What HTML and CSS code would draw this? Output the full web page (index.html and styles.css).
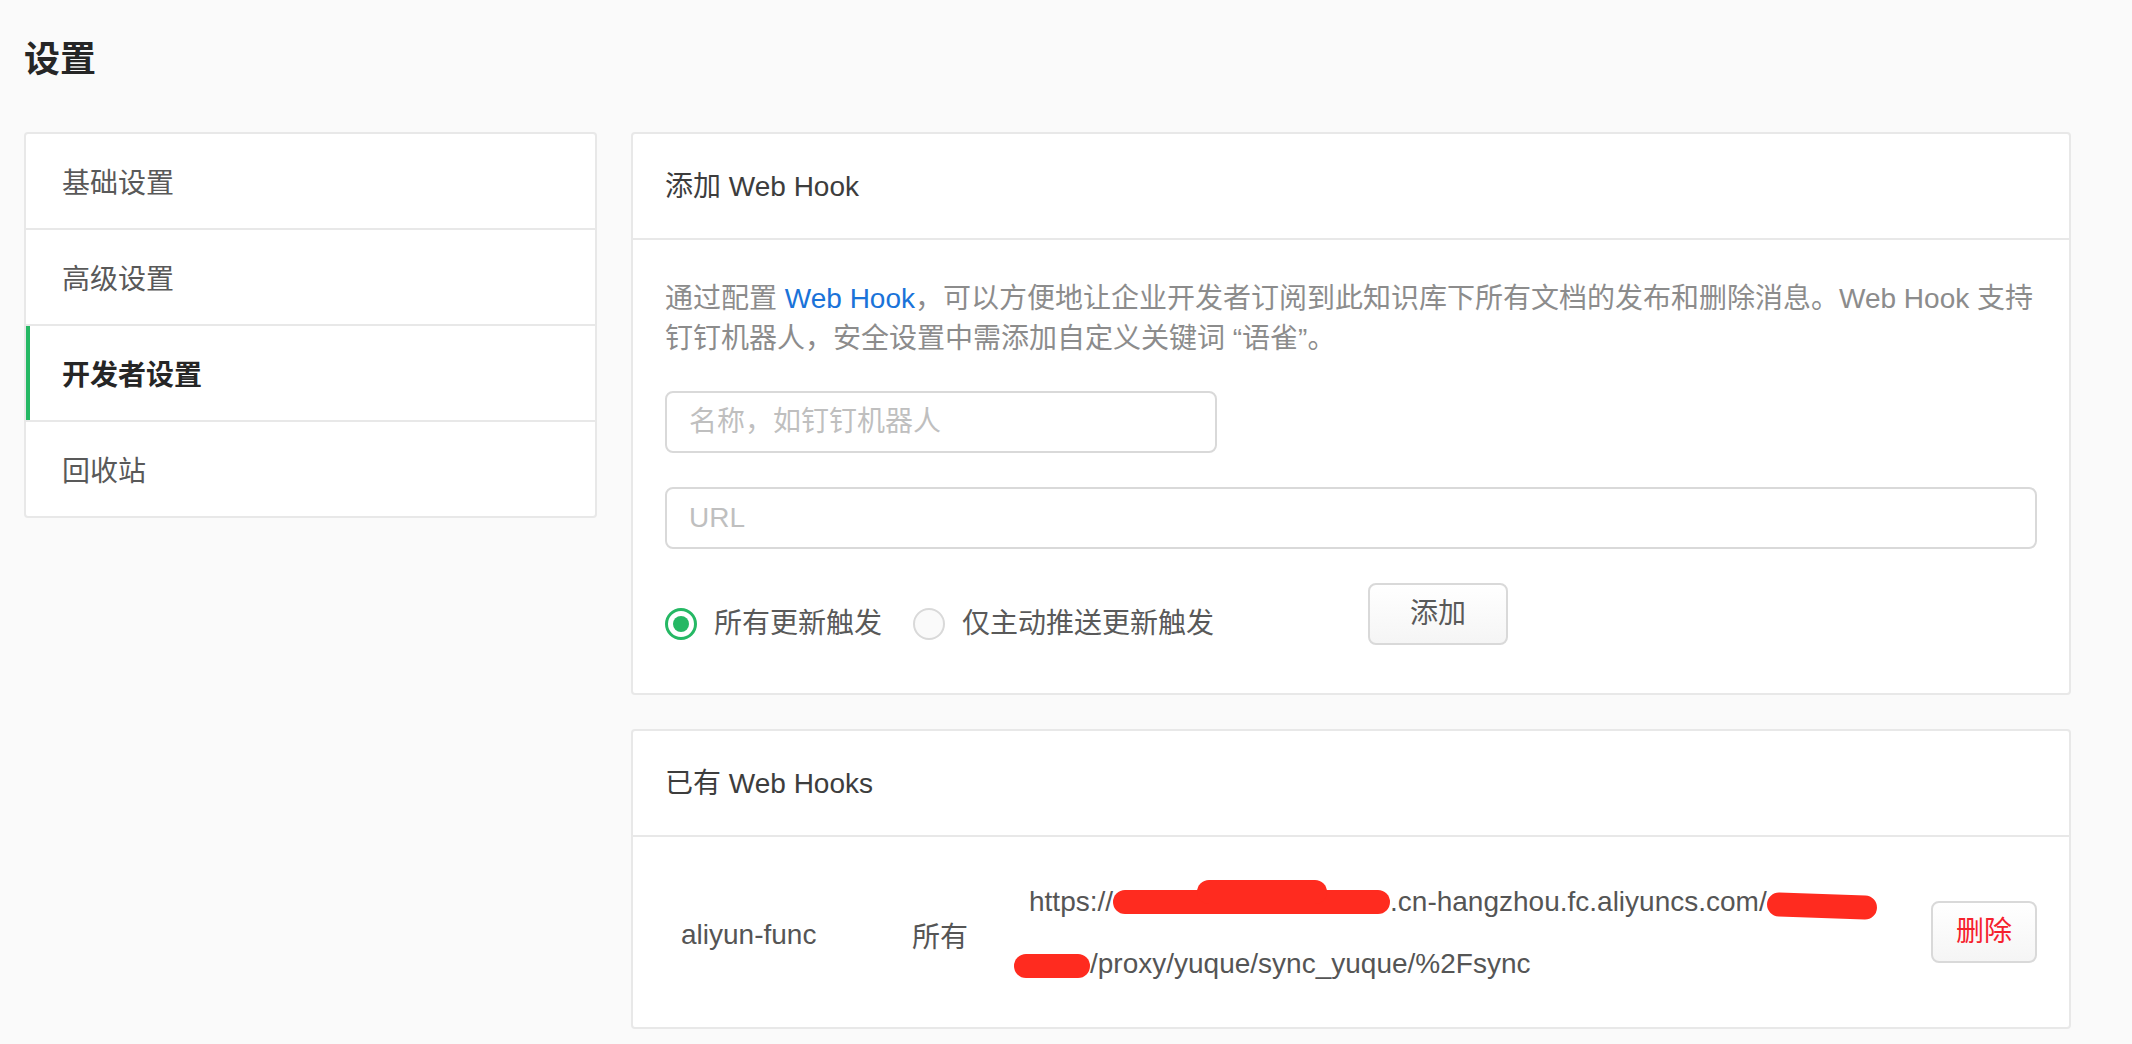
FILE: index.html
```html
<!DOCTYPE html>
<html lang="zh-CN">
<head>
<meta charset="utf-8">
<title>设置</title>
<link rel="stylesheet" href="styles.css">
</head>
<body>
<div class="page">
  <h1 class="page-title">设置</h1>
  <div class="layout">
    <nav class="side-menu">
      <div class="menu-item">基础设置</div>
      <div class="menu-item">高级设置</div>
      <div class="menu-item active">开发者设置</div>
      <div class="menu-item">回收站</div>
    </nav>
    <main class="content">
      <section class="panel">
        <div class="panel-head">添加 Web Hook</div>
        <div class="panel-body form-body">
          <p class="desc">通过配置 <a class="link">Web Hook</a>，可以方便地让企业开发者订阅到此知识库下所有文档的发布和删除消息。Web Hook 支持<br>钉钉机器人，安全设置中需添加自定义关键词 “语雀”。</p>
          <input class="input input-name" type="text" placeholder="名称，如钉钉机器人">
          <input class="input input-url" type="text" placeholder="URL">
          <div class="actions">
            <div class="radio-group">
              <label class="radio checked"><span class="radio-dot"></span><span class="radio-label">所有更新触发</span></label>
              <label class="radio"><span class="radio-dot"></span><span class="radio-label">仅主动推送更新触发</span></label>
            </div>
            <button class="btn btn-add">添加</button>
          </div>
        </div>
      </section>
      <section class="panel panel-list">
        <div class="panel-head">已有 Web Hooks</div>
        <div class="panel-body hook-row">
          <div class="cell cell-name">aliyun-func</div>
          <div class="cell cell-type">所有</div>
          <div class="cell cell-url">
            <div class="url-line">https://<span class="scribble scribble-a"></span>.cn-hangzhou.fc.aliyuncs.com/<span class="scribble scribble-b"></span></div>
            <div class="url-line"><span class="scribble scribble-c"></span>/proxy/yuque/sync_yuque/%2Fsync</div>
          </div>
          <div class="cell cell-action"><button class="btn btn-danger">删除</button></div>
        </div>
      </section>
    </main>
  </div>
</div>
</body>
</html>
```
FILE: styles.css
```css
* { box-sizing: border-box; }

html, body {
  margin: 0;
  padding: 0;
  background: #fafafa;
}

body {
  font-family: "Liberation Sans", "Noto Sans CJK SC", sans-serif;
  font-size: 28px;
  color: #595959;
}

.page {
  padding: 0 0 0 24px;
}

.page-title {
  margin: 0;
  padding-top: 36px;
  height: 132px;
  line-height: 48px;
  font-size: 36px;
  font-weight: 600;
  color: #262626;
}

.layout {
  display: flex;
  align-items: flex-start;
  gap: 34px;
}

.side-menu {
  width: 573px;
  flex: none;
  background: #fff;
  border: 2px solid #e8e8e8;
  border-radius: 4px;
}

.menu-item {
  height: 96px;
  padding-top: 6px;
  line-height: 88px;
  padding-left: 36px;
  border-bottom: 2px solid #e8e8e8;
  color: #595959;
}

.menu-item:last-child {
  height: 94px;
  border-bottom: none;
}

.menu-item.active {
  color: #262626;
  font-weight: 700;
  box-shadow: inset 4px 0 0 #25b864;
}

.content {
  width: 1440px;
  flex: none;
}

.panel {
  background: #fff;
  border: 2px solid #e8e8e8;
  border-radius: 4px;
}

.panel-list {
  margin-top: 34px;
}

.panel-head {
  height: 106px;
  padding: 2px 32px 0;
  line-height: 102px;
  border-bottom: 2px solid #e8e8e8;
  color: #3d3d3d;
}

.form-body {
  padding: 39px 32px 48px;
}

.desc {
  margin: 0 0 32px;
  line-height: 40px;
  color: #8c8c8c;
  white-space: nowrap;
}

.link {
  color: #1a73d9;
  text-decoration: none;
}

.input {
  display: block;
  height: 62px;
  padding: 0 22px;
  border: 2px solid #d9d9d9;
  border-radius: 8px;
  background: #fff;
  font-family: inherit;
  font-size: 28px;
  color: #262626;
  outline: none;
  margin-bottom: 34px;
}

.input::placeholder {
  color: #bfbfbf;
}

.input-name {
  width: 552px;
}

.input-url {
  width: 100%;
}

.actions {
  display: flex;
  align-items: flex-start;
}

.radio-group {
  width: 703px;
  flex: none;
  display: flex;
  align-items: center;
  margin-top: 21px;
  height: 40px;
}

.radio {
  display: flex;
  align-items: center;
  gap: 17px;
  margin-right: 31px;
  line-height: 40px;
}

.radio-dot {
  width: 32px;
  height: 32px;
  flex: none;
  border-radius: 50%;
  border: 2px solid #d9d9d9;
  background: #fafafa;
  position: relative;
}

.radio.checked .radio-dot {
  border: 3px solid #25b864;
  background: #fff;
}

.radio.checked .radio-dot::after {
  content: "";
  position: absolute;
  left: 5px;
  top: 5px;
  width: 16px;
  height: 16px;
  border-radius: 50%;
  background: #25b864;
}

.radio-label {
  color: #595959;
  white-space: nowrap;
}

.btn {
  height: 62px;
  border: 2px solid #d9d9d9;
  border-radius: 8px;
  background: linear-gradient(#ffffff, #f5f5f5);
  font-family: inherit;
  font-size: 28px;
  color: #595959;
  cursor: pointer;
  line-height: 58px;
}

.btn-add {
  width: 140px;
  padding: 0;
}

.btn-danger {
  width: 106px;
  padding: 0;
  color: #f5222d;
}

.hook-row {
  display: grid;
  grid-template-columns: 231px 117px 1fr auto;
  align-items: center;
  padding: 31px 32px;
}

.cell {
  padding-left: 16px;
  color: #555;
}

.cell-name,
.cell-type {
  padding-top: 5px;
}

.cell-action {
  padding-left: 0;
}

.url-line {
  line-height: 64px;
  white-space: nowrap;
}

.url-line:first-child {
  padding-top: 3px;
  line-height: 61px;
}

.scribble {
  display: inline-block;
  vertical-align: middle;
  height: 24px;
  border-radius: 12px;
  background: #ff2b1f;
  position: relative;
}

.scribble-a {
  width: 277px;
  margin-top: -4px;
}

.scribble-a::after {
  content: "";
  position: absolute;
  left: 84px;
  top: -10px;
  width: 130px;
  height: 24px;
  border-radius: 14px;
  background: #ff2b1f;
}

.scribble-b {
  width: 110px;
  margin-top: 4px;
  transform: rotate(2deg);
}

.scribble-c {
  width: 76px;
  margin-left: -15px;
}
```
